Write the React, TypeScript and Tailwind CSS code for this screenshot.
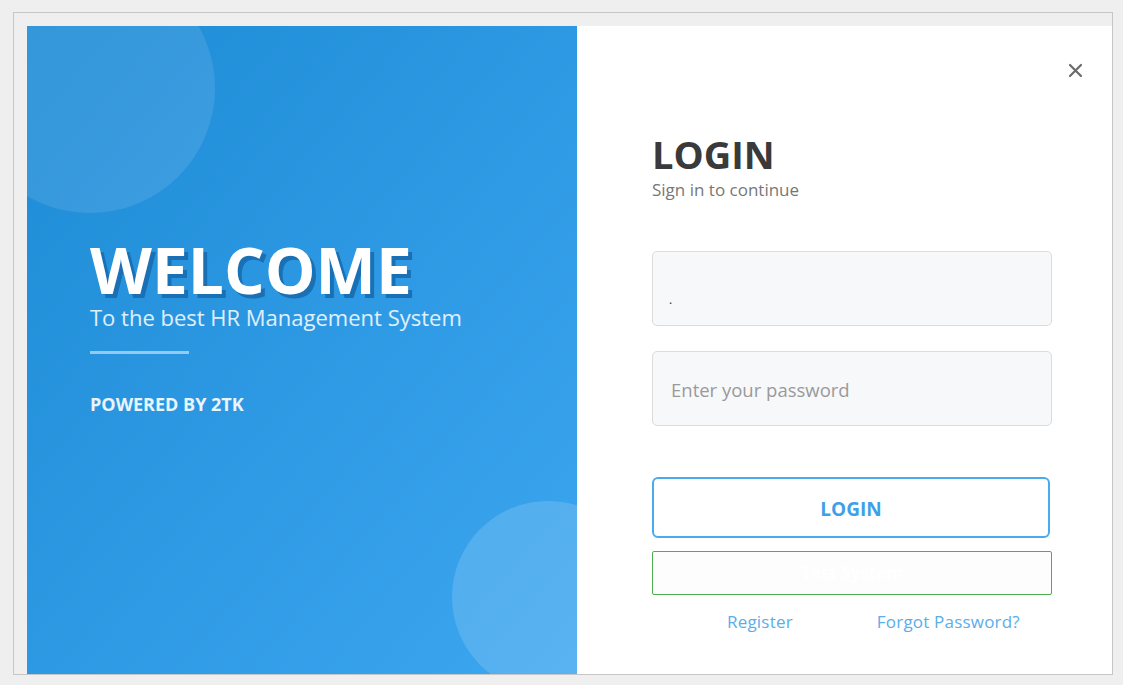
export default function App() {
  return (
    <div
      className="w-[1123px] h-[685px] bg-[#efefef] pt-[12px] pl-[13px] overflow-hidden"
      style={{ fontFamily: '"Open Sans", "Noto Sans", sans-serif' }}
    >
      <div className="w-[1100px] h-[663px] border border-[#c6c6c6] pt-[13px] pl-[13px] overflow-hidden">
        <div className="flex w-[1085px] h-[648px]">
          <WelcomePanel />
          <LoginPanel />
        </div>
      </div>
    </div>
  );
}

function WelcomePanel() {
  return (
    <div className="relative w-[550px] h-full overflow-hidden bg-gradient-to-br from-[#1c8bd5] to-[#3ca6f1]">
      <div className="absolute left-[-62px] top-[-63px] w-[250px] h-[250px] rounded-full bg-white/10" />
      <div className="absolute left-[425px] top-[475px] w-[192px] h-[192px] rounded-full bg-white/15" />
      <div className="relative flex flex-col pl-[63px] pt-[212px]">
        <h1
          className="text-[64px] leading-[64px] font-bold text-white"
          style={{ textShadow: "4px 4px 0 #1a70b4" }}
        >
          WELCOME
        </h1>
        <p className="text-[22px] leading-[26px] text-white/85 mt-[2px]">
          To the best HR Management System
        </p>
        <div className="w-[99px] h-[3px] bg-white/50 mt-[21px]" />
        <p className="text-[18px] leading-[22px] font-bold text-white/90 mt-[39px]">
          POWERED BY 2TK
        </p>
      </div>
    </div>
  );
}

function LoginPanel() {
  return (
    <div className="relative flex-1 bg-white">
      <button className="absolute right-[29px] top-[36px] w-[16px] h-[16px] flex items-center justify-center">
        <svg width="15" height="15" viewBox="0 0 15 15">
          <path d="M2 2 L13 13 M13 2 L2 13" stroke="#6b6b6b" strokeWidth="2.2" strokeLinecap="round" />
        </svg>
      </button>
      <div className="flex flex-col w-[400px] ml-[75px] pt-[105px]">
        <h2 className="text-[38px] leading-[46px] font-bold text-[#3a3a3a]">LOGIN</h2>
        <p className="text-[17px] leading-[22px] text-[#777777] mt-[2px]">Sign in to continue</p>
        <div className="mt-[50px] h-[75px] rounded-[5px] border border-[#dcdcdc] bg-[#f7f8fa] flex items-center px-[16px]">
          <span className="text-[12px] text-[#333] mt-[22px]">.</span>
        </div>
        <div className="mt-[25px] h-[75px] rounded-[5px] border border-[#dcdcdc] bg-[#f7f8fa] flex items-center px-[18px]">
          <span className="text-[18.5px] text-[#9a9a9a] mt-[3px]">Enter your password</span>
        </div>
        <button className="mt-[51px] w-[398px] h-[61px] pt-[3px] rounded-[6px] border-2 border-[#4aaaee] bg-white text-[19px] font-bold text-[#3fa0e8]">
          LOGIN
        </button>
        <button className="mt-[13px] h-[44px] border-[1.5px] border-[#4caf50] rounded-[2px] bg-[#fdfdfd] text-[17px] font-bold text-white">
          Test System
        </button>
        <div className="flex mt-[16px] text-[17px] leading-[22px] tracking-[0.2px] text-[#5aaeea]">
          <a className="ml-[75px]">Register</a>
          <a className="ml-[84px]">Forgot Password?</a>
        </div>
      </div>
    </div>
  );
}
